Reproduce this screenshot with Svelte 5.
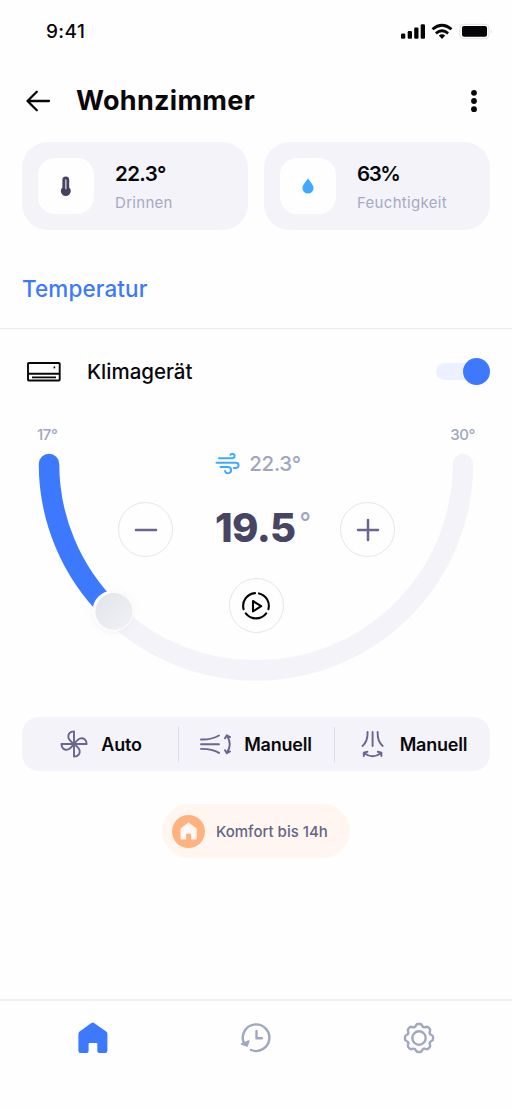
<script>
  const readings = [
    { kind: 'indoor', value: '22.3', unit: '°', label: 'Drinnen' },
    { kind: 'humidity', value: '63%', unit: '', label: 'Feuchtigkeit' }
  ];
  const modes = [
    { kind: 'fan', label: 'Auto' },
    { kind: 'horizontal', label: 'Manuell' },
    { kind: 'vertical', label: 'Manuell' }
  ];
  let on = $state(true);
</script>

<div class="screen">
  <div class="status">
    <span class="clock">9:41</span>
    <svg class="signals" width="94" height="20" viewBox="398 22 94 20">
      <g fill="#050507">
        <rect x="401" y="33.5" width="4.3" height="5.2" rx="1.2" />
        <rect x="407.7" y="31" width="4.3" height="7.7" rx="1.2" />
        <rect x="414.2" y="27.6" width="4.3" height="11.1" rx="1.2" />
        <rect x="420.7" y="24.2" width="4.3" height="14.5" rx="1.2" />
        <path d="M442 38.9l-3.2-3.5q3.2-2.200 6.400 0z" />
        <rect x="462" y="26" width="25" height="10.8" rx="2" />
      </g>
      <g fill="none" stroke="#050507" stroke-width="2.800">
        <path d="M432.500 29.300q9.500-8.200 19 0M435.900 33.300q6.100-5 12.200 0" />
      </g>
      <rect x="459.8" y="24.3" width="29.2" height="14.3" rx="4" fill="none" stroke="#e2e2e7" />
      <path d="M491 29.6q1.600 1.700 0 3.600z" fill="#dcdce2" />
    </svg>
  </div>

  <header>
    <svg width="26" height="24" viewBox="25 89 26 24" fill="none" stroke="#08080b" stroke-width="2.3" stroke-linecap="round" stroke-linejoin="round">
      <path d="M49 101H27.500M36.800 91.800L27.500 101l9.300 9.200" />
    </svg>
    <h1>Wohnzimmer</h1>
    <svg class="more" width="8" height="24" viewBox="0 0 8 24" fill="#08080b">
      <circle cx="4" cy="3.800" r="2.900" /><circle cx="4" cy="12" r="2.900" /><circle cx="4" cy="20.200" r="2.900" />
    </svg>
  </header>

  <section class="readings">
    {#each readings as r}
      <article>
        <div class="tile">
          {#if r.kind === 'indoor'}
            <svg width="12" height="22" viewBox="0 0 12 22">
              <path d="M2.400 5a3.400 3.400 0 0 1 6.800 0v7.400a5 5 0 1 1-6.800 0z" fill="#45425f" />
              <path d="M5.800 5v8.500" stroke="#b9b6ca" stroke-width="1.700" stroke-linecap="round" />
            </svg>
          {:else}
            <svg width="12" height="18" viewBox="0 0 12 18">
              <path d="M6 1.200C4.600 4.200.4 7.400.4 11.100a5.600 5.400 0 0 0 11.200 0C11.600 7.400 7.400 4.200 6 1.200z" fill="#40a9ff" />
            </svg>
          {/if}
        </div>
        <div class="reading {r.kind}">
          <strong>{r.value}{r.unit}</strong>
          <span>{r.label}</span>
        </div>
      </article>
    {/each}
  </section>

  <h2>Temperatur</h2>

  <section class="device">
    <svg width="34" height="20" viewBox="0 0 34 20" fill="none" stroke="#08080b" stroke-width="1.900">
      <rect x="1" y="1" width="31.700" height="17.500" rx=".8" />
      <path d="M1 11.700h31.700M5 15.400h24" />
      <path d="M26.600 5.400h1.600" />
    </svg>
    <h3>Klimagerät</h3>
    <button class="toggle" class:on aria-label="Klimagerät" onclick={() => (on = !on)}><i></i></button>
  </section>

  <section class="dial">
    <svg class="arc" width="512" height="280" viewBox="0 420 512 280" fill="none">
      <defs>
        <linearGradient id="knob" x1="0" y1="0" x2="1" y2="1">
          <stop offset="0" stop-color="#e0e4e9" /><stop offset="1" stop-color="#f1f2f6" />
        </linearGradient>
        <filter id="shade" x="-40%" y="-40%" width="180%" height="180%">
          <feDropShadow dx="0" dy="1" stdDeviation="3" flood-color="#8b91a5" flood-opacity=".1" />
        </filter>
      </defs>
      <path d="M49 464a207 206.500 0 0 0 414 0" stroke="#f4f3f9" stroke-width="20.500" stroke-linecap="round" />
      <path d="M49 464a207 206.500 0 0 0 61 146" stroke="#3d79ff" stroke-width="20.500" stroke-linecap="round" />
      <circle cx="113" cy="611" r="20.500" fill="#fbfcfd" filter="url(#shade)" />
      <circle cx="114" cy="611.500" r="18.500" fill="url(#knob)" />
    </svg>
    <div class="dial-content">
      <div class="limits"><span>17°</span><span>30°</span></div>
      <div class="current">
        <svg width="25" height="23" viewBox="216 453 25 23" fill="none" stroke="#40a9ff" stroke-width="2" stroke-linecap="round">
          <path d="M220 459.300h13.500a2.300 2.300 0 1 0-2.100-3.500M217.500 463.700h19.300a2.600 2.600 0 0 1 .3 5.200h-2.300M221.500 468h7.500a3.100 3.100 0 1 1-3 4" />
        </svg>
        <span>22.3°</span>
      </div>
      <div class="setpoint">
        <button class="round" aria-label="Kälter">
          <svg width="52" height="52" viewBox="1 1 52 52" fill="none" stroke="#68658f" stroke-width="2.500" stroke-linecap="round"><path d="M17 27h20" /></svg>
        </button>
        <div class="target"><b>19.5</b><sup>°</sup></div>
        <button class="round" aria-label="Wärmer">
          <svg width="52" height="52" viewBox="1 1 52 52" fill="none" stroke="#68658f" stroke-width="2.500" stroke-linecap="round"><path d="M17 27h20M27 17v20" /></svg>
        </button>
      </div>
      <button class="round play" aria-label="Start">
        <svg width="52" height="52" viewBox="1 1 52 52" fill="none" stroke="#050507" stroke-width="2.100" stroke-linejoin="round" stroke-linecap="round">
          <path d="M14.600 30.200A12.800 12.800 0 0 1 26 14.100M30 14.400A12.800 12.800 0 0 1 39.400 30.200M37.200 34.300a12.800 12.800 0 0 1-20.400 0" />
          <path d="M24 22v10.400l8.200-5.200z" />
        </svg>
      </button>
    </div>
  </section>

  <section class="modes">
    {#each modes as m}
      <button class={m.kind}>
        {#if m.kind === 'fan'}
          <svg width="28" height="28" viewBox="-14 -14 28 28" fill="none" stroke="#68658f" stroke-width="1.900" stroke-linejoin="round">
            {#each [0, 90, 180, 270] as a}
              <path transform="rotate({a})" d="M0 0V-12.600C-4.500-12.500-6.200-9.500-5.600-6.500C-5-3.800-2.500-2-0 0" />
            {/each}
          </svg>
        {:else if m.kind === 'horizontal'}
          <svg width="32" height="22" viewBox="201 733 32 22" fill="none" stroke="#68658f" stroke-width="1.900" stroke-linecap="round" stroke-linejoin="round">
            <path d="M202 739.500q11 .2 18-4M202 744.200h18M202 748.900q11-.2 18 4" />
            <path d="M228 735.800q5.500 8.400 0 16.800M226 738.300l1.800-3.100 3.200 1.900M226 750.200l1.800 3.100 3.200-1.900" />
          </svg>
        {:else}
          <svg width="24" height="28" viewBox="361 730 24 28" fill="none" stroke="#68658f" stroke-width="1.900" stroke-linecap="round" stroke-linejoin="round">
            <path d="M367.600 732q.2 9.500-5.100 14M372.600 732v14M377.600 732q-.2 9.500 5.100 14" />
            <path d="M364.300 753.200q8.300 6 16.600 0M363.800 756v-3.400l3.600-.8M381.400 756v-3.400l-3.600-.8" />
          </svg>
        {/if}
        <span>{m.label}</span>
      </button>
    {/each}
  </section>

  <div class="schedule">
    <svg width="33" height="33" viewBox="0 0 33 33">
      <circle cx="16.500" cy="16.500" r="16.500" fill="#ffb27d" />
      <path d="M16.500 7.500l8.200 5.900v11.100h-5.600v-5.800h-5v5.800H8.500V13.400z" fill="#fff8f6" />
    </svg>
    <span>Komfort bis 14h</span>
  </div>

  <nav>
    <button aria-label="Start">
      <svg width="34" height="34" viewBox="76 1021 34 34">
        <path d="M91 1023.200q1.700-1.200 3.400 0l11.800 8.200q1.200.9 1.200 2.400v17q0 2.200-2.200 2.200h-6q-1.900 0-1.900-1.900v-7.400q0-.8-.8-.8h-7.100q-.8 0-.8.8v7.400q0 1.900-1.900 1.900h-6.100q-2.200 0-2.200-2.200v-17q0-1.500 1.200-2.400z" fill="#3d79ff" />
      </svg>
    </button>
    <button aria-label="Verlauf">
      <svg width="34" height="34" viewBox="238.500 1021 34 34" fill="none" stroke="#9fa7c2" stroke-width="2.400" stroke-linecap="round" stroke-linejoin="round">
        <path d="M243.600 1043.500A13.300 13.300 0 1 1 250.500 1050M256 1031v7.200h5.300" />
        <path d="M241 1044l5.600 1.900 1.800-4.900z" fill="#9fa7c2" stroke-width="1.600" />
      </svg>
    </button>
    <button aria-label="Einstellungen">
      <svg width="34" height="34" viewBox="-17 -17 34 34" fill="none" stroke="#9fa7c2" stroke-width="2.400" stroke-linejoin="round">
        <circle r="6.700" />
        {#each [0, 45, 90, 135, 180, 225, 270, 315] as a}
          <path transform="rotate({a})" stroke-linecap="round" d="M-4.500-10.900C-2.600-11.200-3.400-14-1.300-14H1.300C3.400-14 2.600-11.200 4.500-10.900" />
        {/each}
      </svg>
    </button>
  </nav>
</div>

<style>
  :global(body) { margin: 0; background: #fefefe; }
  .screen {
    width: 512px; height: 1109px; display: flex; flex-direction: column; overflow: hidden;
    background: #fefefe; color: #08080b; font-family: Inter, "Open Sans", sans-serif;
  }
  h1, h2, h3 { margin: 0; }
  svg { display: block; flex: none; }
  button { border: 0; padding: 0; background: none; font: inherit; color: inherit; }
  .status { height: 64px; box-sizing: border-box; padding: 0 20px 0 46px; display: flex; align-items: center; justify-content: space-between; }
  .clock { font-weight: 500; font-size: 19px; line-height: 24px; letter-spacing: .4px; }
  header { height: 78px; box-sizing: border-box; padding: 0 34px 5px 25px; display: flex; align-items: center; }
  h1 { margin-left: 25px; font-size: 27px; line-height: 36px; font-weight: 700; letter-spacing: .3px; }
  .more { margin-left: auto; }
  .readings { display: grid; grid-template-columns: 226px 226px; gap: 16px; padding: 0 22px; }
  article { height: 88px; display: flex; align-items: center; border-radius: 26px; background: #f4f3f9; }
  .tile { width: 56px; height: 56px; margin-left: 16px; display: grid; place-items: center; border-radius: 17px; background: #fefefe; }
  .reading { margin-left: 21px; padding-top: 2px; display: flex; flex-direction: column; gap: 6px; }
  .reading strong { font-size: 20.500px; line-height: 26px; font-weight: 600; letter-spacing: -.6px; }
  .humidity strong { letter-spacing: -1.400px; }
  .reading span { font-size: 15px; line-height: 20px; color: #a5aac4; letter-spacing: .3px; }
  h2 { height: 99px; box-sizing: border-box; padding: 43px 22px 0; border-bottom: 1.500px solid #ebebf3; font-size: 22.500px; line-height: 32px; font-weight: 500; letter-spacing: .1px; color: #3d79ff; }
  .device { height: 85px; display: flex; align-items: center; padding: 0 22px 0 27px; }
  h3 { margin-left: 26px; font-size: 20.500px; line-height: 28px; font-weight: 500; }
  .toggle { width: 54px; height: 27px; margin-left: auto; display: grid; align-items: center; }
  .toggle::before { content: ""; grid-area: 1 / 1; width: 44px; height: 17px; border-radius: 9px; background: #ebf1ff; }
  .toggle i { grid-area: 1 / 1; width: 27px; height: 27px; border-radius: 50%; background: #b9c1d6; }
  .toggle.on i { justify-self: end; background: #3d79ff; }
  .dial { display: grid; height: 303px; padding-top: 6px; box-sizing: border-box; }
  .arc, .dial-content { grid-area: 1 / 1; }
  .dial-content { display: flex; flex-direction: column; align-items: center; }
  .limits { align-self: stretch; padding: 5px 37px 0; display: flex; justify-content: space-between; font-size: 15px; line-height: 20px; font-weight: 500; letter-spacing: -.4px; color: #9fa7c0; }
  .current { height: 30px; margin: 3px 0 0 4px; display: flex; align-items: center; gap: 9px; font-size: 20.500px; font-weight: 500; letter-spacing: -.3px; color: #9fa7c0; }
  .setpoint { margin: 24px 0 0 1px; width: 277px; display: flex; align-items: center; justify-content: space-between; }
  .round { width: 55px; height: 55px; box-sizing: border-box; display: grid; place-items: center; border: 1.500px solid #e6e4ee; border-radius: 50%; }
  .target { display: flex; align-items: flex-start; color: #474563; padding: 0 0 3px 13px; }
  .target b { font-size: 40px; line-height: 50px; font-weight: 800; letter-spacing: -.6px; }
  .target sup { margin-left: 4px; font-size: 25px; line-height: 39px; font-weight: 500; color: #9fa7c0; }
  .play { margin-top: 21px; }
  .modes { margin: 0 22px; height: 54px; display: grid; grid-template-columns: 156px 156px 156px; border-radius: 17px; background: #f4f3f9; }
  .modes button { display: flex; align-items: center; justify-content: center; gap: 13px; padding-left: 2px; font-size: 18px; font-weight: 600; letter-spacing: -.2px; }
  .modes button + button { background: linear-gradient(#dedbe9, #dedbe9) 0 50% / 1px 35px no-repeat; }
  .modes .horizontal { gap: 12px; padding-left: 0; }
  .modes .vertical { gap: 15px; padding-left: 4px; }
  .schedule { align-self: center; width: 188px; height: 54px; margin-top: 33px; box-sizing: border-box; padding-left: 10px; display: flex; align-items: center; gap: 11px; border-radius: 27px; background: #fff6f2; color: #626685; font-size: 15px; font-weight: 500; }
  nav { height: 110px; margin-top: auto; box-sizing: border-box; border-top: 2px solid #f0f0f6; display: flex; justify-content: space-between; align-items: flex-start; padding: 20px 76px 0; }
</style>
